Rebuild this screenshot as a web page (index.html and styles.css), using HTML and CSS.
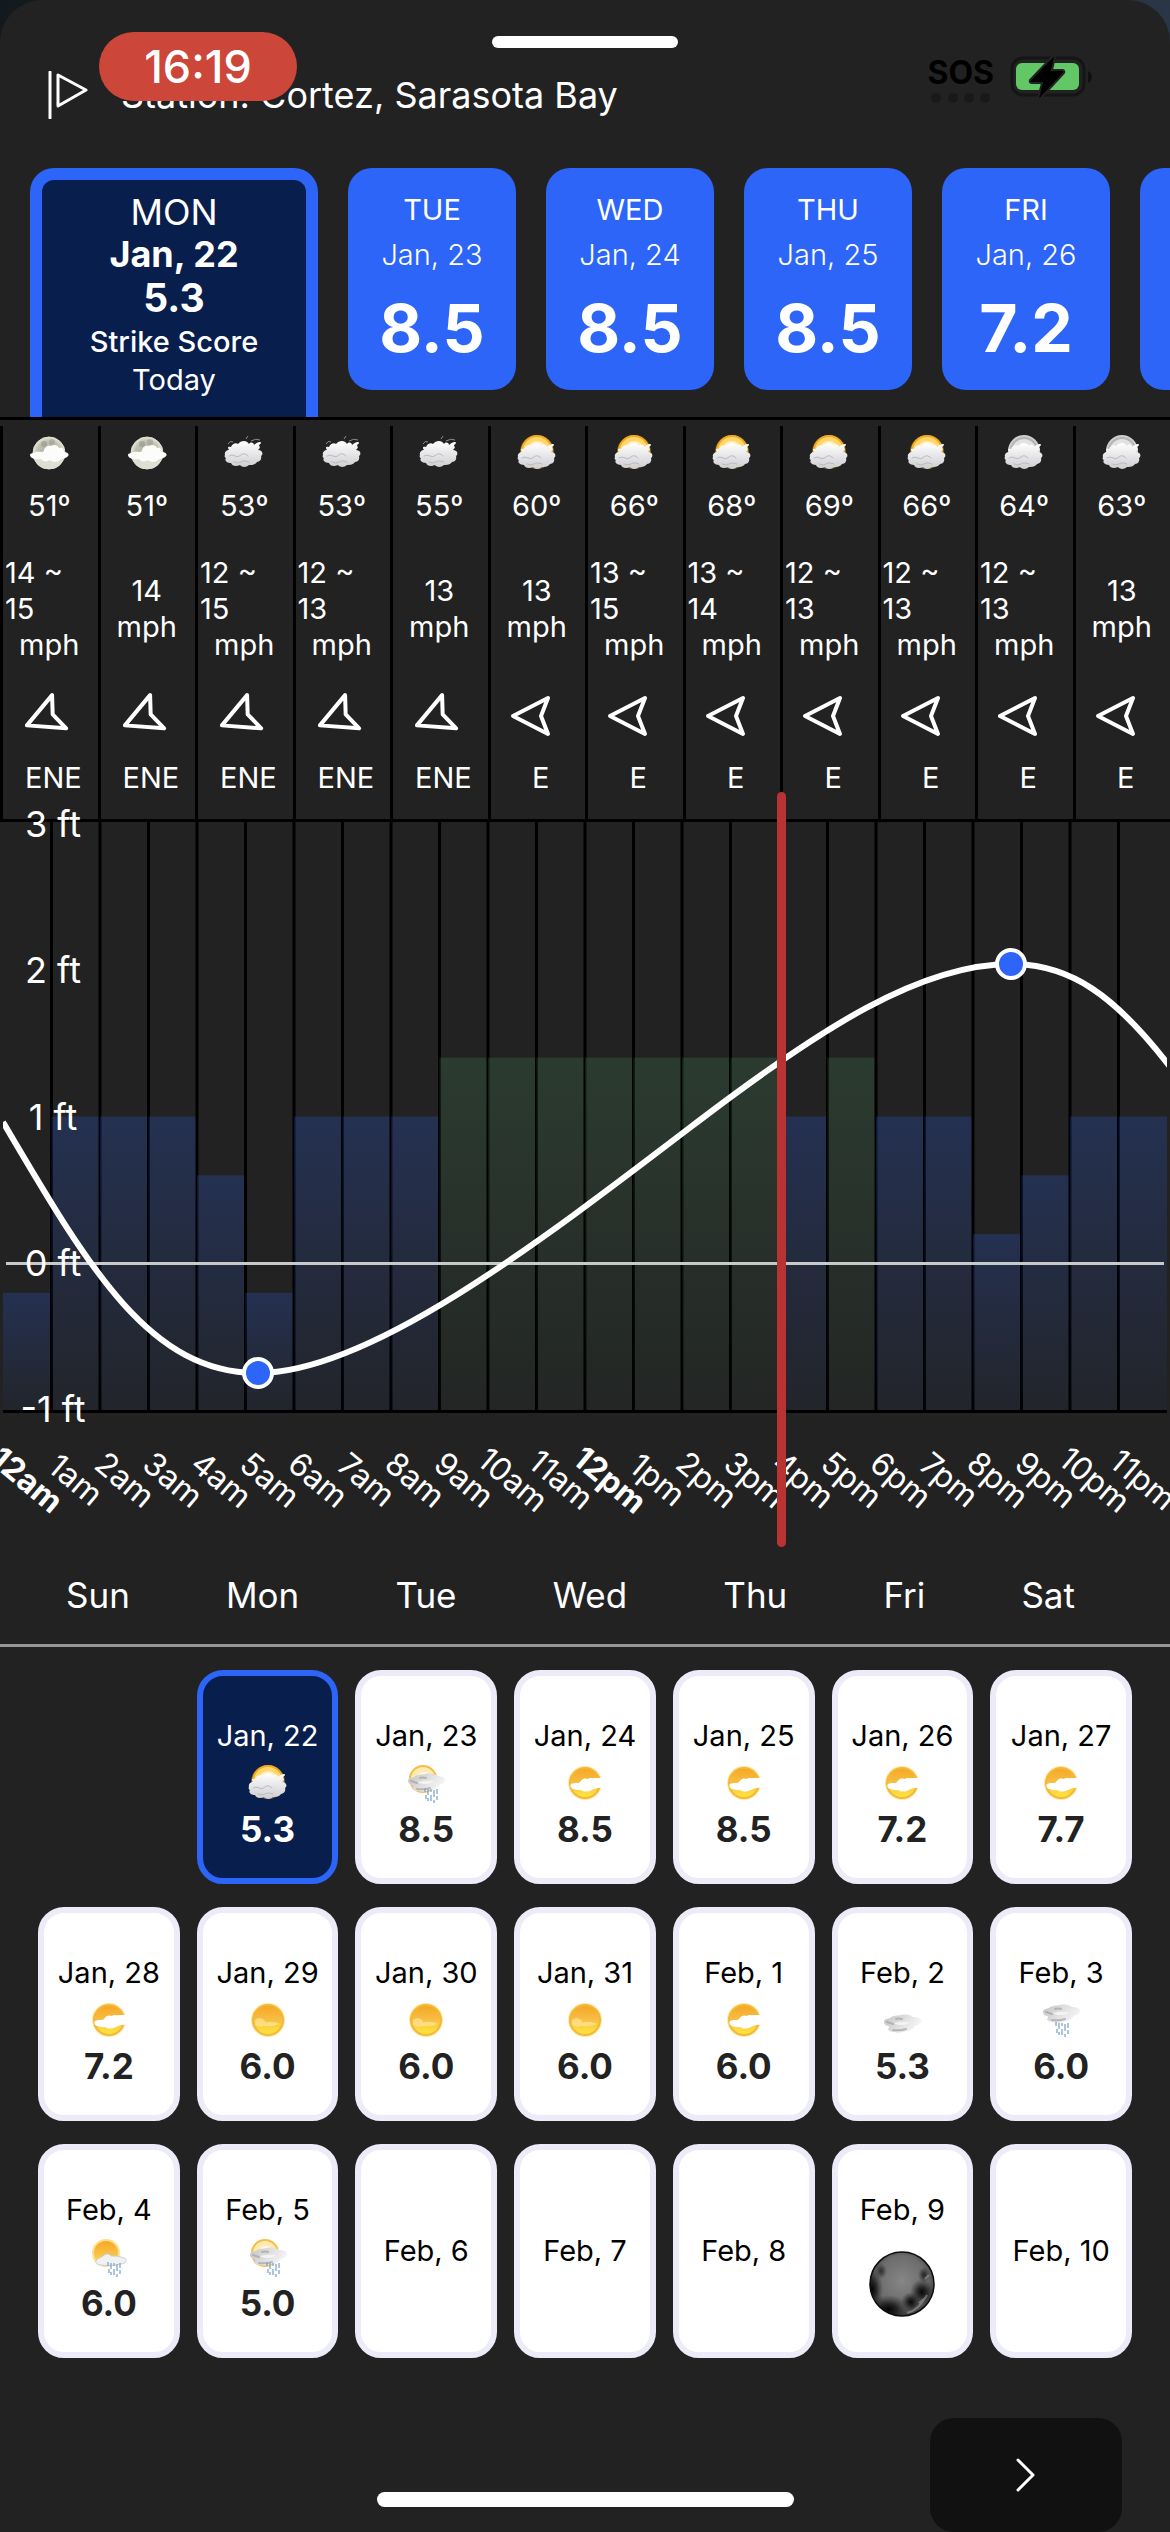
FILE: index.html
```html
<!DOCTYPE html>
<html lang="en">
<head>
    <meta charset="UTF-8">
    <meta name="viewport" content="width=device-width, initial-scale=1.0">
    <title>Strike Score - Cortez, Sarasota Bay</title>
    <link rel="stylesheet" href="styles.css">
</head>
<body>

<!-- weather icons -->
<svg class="defs" width="0" height="0" aria-hidden="true">
    <defs>
        <linearGradient id="sunFill" x1="0" y1="0" x2="0" y2="1">
            <stop offset="0" stop-color="#f5a623"/>
            <stop offset="0.5" stop-color="#f8bf45"/>
            <stop offset="1" stop-color="#ffe83c"/>
        </linearGradient>
        <linearGradient id="cloudFill" x1="0" y1="0" x2="0" y2="1">
            <stop offset="0" stop-color="#ffffff"/>
            <stop offset="0.55" stop-color="#e4e4e6"/>
            <stop offset="1" stop-color="#cfcfd1"/>
        </linearGradient>
        <linearGradient id="flatFill" x1="0" y1="0" x2="1" y2="0.4">
            <stop offset="0" stop-color="#c4c4c6"/>
            <stop offset="0.5" stop-color="#dcdcdd"/>
            <stop offset="1" stop-color="#f4f4f4"/>
        </linearGradient>
        <radialGradient id="nightFill">
            <stop offset="0" stop-color="#a9a99c"/>
            <stop offset="0.75" stop-color="#c2c2b4"/>
            <stop offset="1" stop-color="#e6e6d6"/>
        </radialGradient>
        <radialGradient id="moonFill" cx="0.5" cy="0.45" r="0.56">
            <stop offset="0" stop-color="#868686"/>
            <stop offset="0.7" stop-color="#6c6c6c"/>
            <stop offset="1" stop-color="#3a3a3a"/>
        </radialGradient>
        <radialGradient id="moonShade">
            <stop offset="0" stop-color="#000" stop-opacity="0.95"/>
            <stop offset="0.4" stop-color="#0c0c0c" stop-opacity="0.7"/>
            <stop offset="1" stop-color="#222" stop-opacity="0"/>
        </radialGradient>
        <clipPath id="moonClip"><circle cx="33" cy="33" r="32"/></clipPath>
    </defs>

    <symbol id="puff" viewBox="0 0 40 40">
        <path fill="url(#cloudFill)" d="M1 22c-1-3 2-5 4-5-2-3-1-4 2-3 1-3 5-5 7-3 3-4 9-4 11 0 2-3 5-1 5 1 3-3 7-4 7-2 0 1-2 1-2 3 2 1 0 3-1 4 4 0 6 4 3 6 1 3-1 6-4 6-2 3-6 3-8 3-3 3-8 2-9 0-4 2-8 1-9-2-4 0-7-3-5-5-1 0-2-2-1-3z"/>
        <path fill="none" stroke="#b9bac2" stroke-width="1" stroke-linecap="round" d="M5 23q3-2 6 0t6-1 7 1M10 29q4 2 7 0t8 0"/>
    </symbol>

    <symbol id="cloudy" viewBox="0 0 40 40">
        <path fill="none" stroke="#8f8f8f" stroke-width="1" d="M4 11q2-4 5-2M22 6l2-3M27 8q5-3 9-1"/>
        <use href="#puff" x="0" y="0" width="40" height="40"/>
    </symbol>
    <symbol id="night" viewBox="0 0 40 40">
        <circle cx="20" cy="20" r="16" fill="url(#nightFill)" stroke="#e2e2d2"/>
        <circle cx="15" cy="11" r="3" fill="#8e8e84" opacity="0.5"/>
        <circle cx="23" cy="9" r="3" fill="#97978c" opacity="0.5"/>
        <path fill="#deded4" d="M6 24h28q-1 12-14 12T6 24z"/>
        <path fill="#fcfcfa" d="M1 22c0-2 4-2 6-3 3-1 5 1 8-1 0-4 4-6 7-5 3-2 7-1 8 2 4-1 5 2 5 4 3 0 6 2 4 4-2 3-6 2-8 4-3 3-8 2-10 0-3 2-7 2-9-1-3 1-11 0-11-4z"/>
    </symbol>
    <symbol id="sunCloud" viewBox="0 0 40 40">
        <circle cx="20" cy="19" r="17" fill="#f7b32b" opacity="0.45"/>
        <circle cx="20" cy="18" r="15" fill="#ffd76a" stroke="#f5a91c" stroke-width="2"/>
        <circle cx="20" cy="18" r="10" fill="#fff" opacity="0.6"/>
        <use href="#puff" x="0" y="2" width="40" height="40"/>
    </symbol>
    <symbol id="moonCloud" viewBox="0 0 40 40">
        <circle cx="20" cy="18" r="15" fill="#b4b4b4" stroke="#cfcfcf" stroke-width="2"/>
        <circle cx="20" cy="18" r="12" fill="#e2e2e2"/>
        <use href="#puff" x="0" y="2" width="40" height="40"/>
    </symbol>
    <symbol id="hazy" viewBox="0 0 40 40">
        <circle cx="20" cy="20" r="17" fill="#ffe9a0"/>
        <circle cx="20" cy="20" r="15" fill="url(#sunFill)" stroke="#f3b73a" stroke-width="2"/>
        <path fill="#fff1b8" opacity="0.5" d="M7 20q5-4 9 0 3 3 0 6-5 2-9-1zM16 23q8-3 16 1-8 3-16 2z"/>
    </symbol>
    <symbol id="sunny" viewBox="0 0 40 40">
        <circle cx="20" cy="20" r="17" fill="#ffe9a0"/>
        <circle cx="20" cy="20" r="15" fill="url(#sunFill)" stroke="#f3b73a" stroke-width="2"/>
        <path fill="#fff" d="M6 21c4-2 7 0 9-2 2-4 6-4 8-3 2-2 5 0 6-1h9v10c-6-1-8 1-11 2-4 2-8 2-11 0-3 1-6-1-8-1-3-1-3-4-2-5z"/>
    </symbol>
    <symbol id="flatCloud" viewBox="0 0 40 40">
        <path fill="url(#flatFill)" d="M2 18c0-3 3-3 6-4 3-3 8-2 11-3 5-1 10 0 12 2 4 0 8 1 8 4s-3 4-6 5c-2 3-5 5-9 5-4 2-9 2-12 1-3 0-6-1-6-3 1-1 2-2 0-3-2 0-4-2-4-4z"/>
        <path fill="#f3f3f3" d="M12 19q8-2 16-1-2 3-8 3t-8-2z"/>
        <path fill="none" stroke="#a4a4a7" stroke-width="2" stroke-linecap="round" opacity="0.7" d="M5 18l6 2M14 15q3-1 6 0M11 26q7 1 13-1"/>
    </symbol>
    <symbol id="streaks" viewBox="0 0 40 40">
        <path fill="none" stroke="#7fa6d2" stroke-width="1.3" d="M16 23v4M19 24v6M17 30v4M22 24v3M22 30v6M25 25v7M25 35v3M28 24v5M28 31v4M19 33v3"/>
    </symbol>
    <symbol id="sunRain" viewBox="0 0 40 40">
        <circle cx="17" cy="16" r="13" fill="#ffeab2" stroke="#f7bd48" stroke-width="2"/>
        <circle cx="18" cy="17" r="8" fill="#fff8e4"/>
        <use href="#flatCloud" x="0" y="0" width="40" height="40"/>
        <use href="#streaks" x="3" y="2" width="40" height="40"/>
    </symbol>
    <symbol id="warmRain" viewBox="0 0 40 40">
        <circle cx="17" cy="16" r="13" fill="url(#sunFill)" stroke="#ffdf8a" stroke-width="2"/>
        <path fill="#f1f1f1" stroke="#cdcdcf" d="M7 24c2-4 6-3 8-6 3-2 6-1 7 1 4 0 8 0 13 2 5 2 1 6-4 6-7 2-14 2-19 1-3 0-6-2-5-4z"/>
        <use href="#streaks" x="3" y="2" width="40" height="40"/>
    </symbol>
    <symbol id="lightCloud" viewBox="0 0 40 40">
        <use href="#flatCloud" x="0" y="4" width="40" height="40"/>
    </symbol>
    <symbol id="rain" viewBox="0 0 40 40">
        <use href="#flatCloud" x="0" y="-6" width="40" height="40"/>
        <use href="#streaks" x="-1" y="-1" width="40" height="40"/>
    </symbol>
    <symbol id="newMoon" viewBox="0 0 66 66">
        <g clip-path="url(#moonClip)">
            <circle cx="33" cy="33" r="32" fill="url(#moonFill)"/>
            <ellipse cx="3" cy="38" rx="11" ry="20" fill="url(#moonShade)"/>
            <ellipse cx="20" cy="58" rx="20" ry="14" fill="url(#moonShade)"/>
            <ellipse cx="53" cy="41" rx="12" ry="13" fill="url(#moonShade)"/>
            <ellipse cx="42" cy="51" rx="10" ry="10" fill="url(#moonShade)"/>
            <ellipse cx="55" cy="24" rx="6" ry="8" fill="url(#moonShade)" opacity="0.7"/>
            <ellipse cx="12" cy="20" rx="6" ry="8" fill="url(#moonShade)" opacity="0.6"/>
            <path d="M38 62q12-3 20-18M56 28l4-4M50 52l6-5" fill="none" stroke="#999" stroke-width="2" opacity="0.6"/>
        </g>
        <circle cx="33" cy="33" r="32" fill="none" stroke="#0b0b0b" stroke-width="1.5"/>
    </symbol>
</svg>

<main class="sheet">
    <span class="grabber"></span>

    <div class="status">
        <span class="clock">16:19</span>
        <div class="status-right">
            <div class="sos">SOS<div class="dots"><i></i><i></i><i></i><i></i></div></div>
            <svg class="battery" viewBox="0 0 84 44">
                <rect x="2" y="3" width="72" height="37" rx="11" fill="#222" stroke="#151515" stroke-width="3"/>
                <rect x="6" y="8" width="63" height="27" rx="6" fill="#62c866"/>
                <path d="M78 16q4 2 4 6t-4 6z" fill="#111"/>
                <path d="M43 1L20 25q-1 3 2 3h10l-4 15q1 1 3 0l23-25q1-3-2-3H42l3-13q-1-2-2-1z" fill="#000" stroke="#222" stroke-width="2"/>
            </svg>
        </div>
    </div>

    <header class="station">
        <svg class="flag" viewBox="0 0 42 48">
            <path d="M3 1v46M11 4v31L39 19z" fill="none" stroke="#fff" stroke-width="3" stroke-linecap="round" stroke-linejoin="round"/>
        </svg>
        <span>Station: Cortez, Sarasota Bay</span>
    </header>

    <nav class="days" id="days"></nav>

    <section class="hours" id="hours"></section>

    <section class="tide">
        <svg class="plot" viewBox="0 0 1164 591">
            <defs>
                <linearGradient id="blueBar" x1="0" y1="0" x2="0" y2="1">
                    <stop offset="0" stop-color="#2c65f7" stop-opacity="0.22"/>
                    <stop offset="1" stop-color="#2c65f7" stop-opacity="0.04"/>
                </linearGradient>
                <linearGradient id="greenBar" x1="0" y1="0" x2="0" y2="1">
                    <stop offset="0" stop-color="#4f9f68" stop-opacity="0.2"/>
                    <stop offset="1" stop-color="#4f9f68" stop-opacity="0.03"/>
                </linearGradient>
                <clipPath id="plotClip"><rect x="0" y="0" width="1164" height="591"/></clipPath>
            </defs>
            <g id="bars"></g>
            <path d="M0 589.5H1164" stroke="#000" stroke-width="3"/>
            <path d="M3 441.5H1161" stroke="#c8cac9" stroke-width="3"/>
            <path class="curve" clip-path="url(#plotClip)" d="M0 300C87 448 147 551 255 551C367 551 537 420 697 298C817 207 917 142 1008 142C1067 142 1112 173 1168 246"/>
            <circle class="point" cx="255" cy="551" r="14"/>
            <circle class="point" cx="1008" cy="142" r="14"/>
            <g class="feet">
                <text x="50" y="15">3 ft</text>
                <text x="50" y="161">2 ft</text>
                <text x="50" y="308">1 ft</text>
                <text x="50" y="454">0 ft</text>
                <text x="50" y="600">-1 ft</text>
            </g>
        </svg>
        <div class="times" id="times"></div>
        <span class="now"></span>
    </section>

    <div class="weekdays">
        <span>Sun</span><span>Mon</span><span>Tue</span><span>Wed</span><span>Thu</span><span>Fri</span><span>Sat</span>
    </div>

    <section class="calendar" id="calendar"></section>

    <footer class="footer">
        <button class="next" aria-label="Next">
            <svg viewBox="0 0 20 34"><path d="M2 2l15 15L2 32" fill="none" stroke="#fff" stroke-width="3" stroke-linecap="round" stroke-linejoin="round"/></svg>
        </button>
    </footer>
    <span class="home"></span>
</main>

<script>
    const icon = (name, cls = 'icon') => `<svg class="${cls}"><use href="#${name}"></use></svg>`;

    // top day strip
    const days = [['TUE', 'Jan, 23', '8.5'], ['WED', 'Jan, 24', '8.5'], ['THU', 'Jan, 25', '8.5'], ['FRI', 'Jan, 26', '7.2'], ['', '', '']];
    document.getElementById('days').innerHTML = `
        <button class="day active">
            <span class="name">MON</span>
            <strong class="date">Jan, 22</strong>
            <strong class="score">5.3</strong>
            <span class="label">Strike Score</span>
            <span class="today">Today</span>
        </button>` + days.map(([name, date, score]) => `
        <button class="day">
            <span class="name">${name}</span>
            <span class="date">${date}</span>
            <strong class="score">${score}</strong>
        </button>`).join('');

    // two hour forecast columns
    const hours = [
        ['night', 51, '14 ~<br>15', 'ENE'], ['night', 51, '14', 'ENE'],
        ['cloudy', 53, '12 ~<br>15', 'ENE'], ['cloudy', 53, '12 ~<br>13', 'ENE'],
        ['cloudy', 55, '13', 'ENE'], ['sunCloud', 60, '13', 'E'],
        ['sunCloud', 66, '13 ~<br>15', 'E'], ['sunCloud', 68, '13 ~<br>14', 'E'],
        ['sunCloud', 69, '12 ~<br>13', 'E'], ['sunCloud', 66, '12 ~<br>13', 'E'],
        ['moonCloud', 64, '12 ~<br>13', 'E'], ['moonCloud', 63, '13', 'E']
    ];
    document.getElementById('hours').innerHTML = hours.map(([sky, temp, wind, dir]) => `
        <div class="hour">
            ${icon(sky)}
            <span>${temp}º</span>
            <div class="wind"><span class="${wind.length > 2 ? 'range' : ''}">${wind}</span><span>mph</span></div>
            <svg class="arrow ${dir}" viewBox="-28 -28 56 56"><path d="M-24 0L11 -18L4 0L11 18Z"/></svg>
            <span>&nbsp;${dir}</span>
        </div>`).join('');

    // activity bars in ft, one per hour
    const levels = [-0.2, 1, 1, 1, 0.6, -0.2, 1, 1, 1, 1.4, 1.4, 1.4, 1.4, 1.4, 1.4, 1.4, 1, 1.4, 1, 1, 0.2, 0.6, 1, 1];
    document.getElementById('bars').innerHTML = levels.map((ft, i) => {
        const x = i * 48.5;
        const y = 441.5 - ft * 147;
        const line = i ? `<path d="M${x} 0V588" stroke="#000" stroke-width="3"/>` : '';
        return `${line}<rect x="${x}" y="${y}" width="48.5" height="${588 - y}" fill="url(#${ft > 1 ? 'green' : 'blue'}Bar)"/>`;
    }).join('');

    document.getElementById('times').innerHTML = levels.map((_, i) => {
        const text = (i % 12 || 12) + (i < 12 ? 'am' : 'pm');
        return `<span class="time${i % 12 ? '' : ' bold'}"><span>${text}</span></span>`;
    }).join('');

    // calendar
    const calendar = [
        null, ['Jan, 22', 'sunCloud', '5.3'], ['Jan, 23', 'sunRain', '8.5'], ['Jan, 24', 'sunny', '8.5'],
        ['Jan, 25', 'sunny', '8.5'], ['Jan, 26', 'sunny', '7.2'], ['Jan, 27', 'sunny', '7.7'],
        ['Jan, 28', 'sunny', '7.2'], ['Jan, 29', 'hazy', '6.0'], ['Jan, 30', 'hazy', '6.0'], ['Jan, 31', 'hazy', '6.0'],
        ['Feb, 1', 'sunny', '6.0'], ['Feb, 2', 'lightCloud', '5.3'], ['Feb, 3', 'rain', '6.0'],
        ['Feb, 4', 'warmRain', '6.0'], ['Feb, 5', 'sunRain', '5.0'], ['Feb, 6'], ['Feb, 7'],
        ['Feb, 8'], ['Feb, 9', 'newMoon'], ['Feb, 10']
    ];
    document.getElementById('calendar').innerHTML = calendar.map((cell, i) => {
        if (!cell) return '<span></span>';
        const [date, sky, score] = cell;
        return `<button class="cell${i === 1 ? ' selected' : ''}${sky ? ' filled' : ''}">
            <span>${date}</span>
            ${sky ? icon(sky, sky === 'newMoon' ? 'moon' : 'icon') : ''}
            ${score ? `<strong>${score}</strong>` : ''}
        </button>`;
    }).join('');
</script>

</body>
</html>
```
FILE: styles.css
```css
* {
    box-sizing: border-box;
}
body {
    margin: 0;
    background: linear-gradient(90deg, #121a20, #2a3546);
    color: #fff;
    font-family: Inter, "Liberation Sans", sans-serif;
    font-size: 29px;
    line-height: 36px;
}
button {
    font: inherit;
    color: inherit;
    border: 0;
    padding: 0;
}
svg {
    display: block;
}
.defs {
    position: absolute;
}
.sheet {
    position: relative;
    min-height: 100vh;
    overflow: hidden;
    background: #222;
    border-radius: 42px 42px 0 0;
}
.grabber {
    position: absolute;
    top: 36px;
    left: 50%;
    width: 186px;
    height: 12px;
    margin-left: -93px;
    border-radius: 6px;
    background: #fff;
}

/* status bar lies over the sheet header */
.status {
    position: absolute;
    top: 32px;
    left: 99px;
    right: 76px;
    display: flex;
    justify-content: space-between;
    align-items: flex-start;
}
.clock {
    width: 198px;
    border-radius: 35px;
    background: #cc4639;
    text-align: center;
    font-size: 45px;
    font-weight: 500;
    line-height: 69px;
}
.status-right {
    display: flex;
    gap: 16px;
    padding-top: 23px;
}
.sos {
    color: #000;
    font-size: 32px;
    font-weight: 700;
    line-height: 36px;
}
.dots {
    display: flex;
    justify-content: space-between;
    padding: 2px 4px;
}
.dots i {
    width: 10px;
    height: 10px;
    border-radius: 50%;
    background: #191919;
}
.battery {
    width: 84px;
    height: 44px;
}

.station {
    display: flex;
    gap: 32px;
    padding: 71px 46px 49px 47px;
    font-size: 36px;
    line-height: 48px;
}
.flag {
    width: 42px;
    height: 48px;
}

.days {
    display: flex;
    gap: 30px;
    height: 252px;
    padding-left: 30px;
    overflow: hidden;
    border-bottom: 3px solid #000;
}
.day {
    display: flex;
    flex: none;
    flex-direction: column;
    align-items: center;
    width: 168px;
    height: 222px;
    padding-top: 24px;
    border-radius: 24px;
    background: #2c65f7;
}
.day .date {
    margin-top: 9px;
    font-weight: 300;
}
.day .score {
    margin-top: 19px;
    font-size: 66px;
    font-weight: 700;
    line-height: 72px;
}
.day.active {
    width: 288px;
    height: 249px;
    padding-top: 11px;
    border: 12px solid #2c65f7;
    border-bottom: 0;
    border-radius: 24px 24px 0 0;
    background: #081e4d;
}
.day.active .name,
.day.active .date {
    margin: 0;
    font-size: 36px;
    line-height: 42px;
}
.day.active .date {
    font-weight: 700;
}
.day.active .score {
    margin: 0;
    font-size: 39px;
    line-height: 46px;
}
.label {
    font-weight: 500;
    line-height: 42px;
}
.today {
    line-height: 34px;
}

.hours {
    display: grid;
    grid-template-columns: repeat(12, 1fr);
    padding-top: 6px;
    border-bottom: 3px solid #000;
}
.hour {
    display: flex;
    flex-direction: column;
    align-items: center;
    min-width: 0;
    padding: 7px 2px 23px 0;
    border-left: 3px solid #000;
}
.icon {
    width: 40px;
    height: 40px;
}
.hour .icon {
    margin-bottom: 15px;
}
.wind {
    display: flex;
    flex-direction: column;
    justify-content: center;
    align-items: center;
    align-self: stretch;
    height: 108px;
    margin: 31px 0 25px;
}
.wind .range {
    align-self: stretch;
    padding-left: 2px;
}
.arrow {
    width: 56px;
    height: 56px;
    margin-bottom: 16px;
}
.arrow path {
    fill: none;
    stroke: #fff;
    stroke-width: 4px;
    stroke-linejoin: round;
}
.arrow.ENE {
    transform: rotate(-23deg);
}

.tide {
    position: relative;
    padding: 0 3px;
}
.plot {
    width: 100%;
    overflow: visible;
}
.curve {
    fill: none;
    stroke: #fff;
    stroke-width: 6px;
}
.point {
    fill: #2c65f7;
    stroke: #fff;
    stroke-width: 4px;
}
.feet text {
    fill: #fff;
    font-size: 36px;
    text-anchor: middle;
}
.times {
    display: grid;
    grid-template-columns: repeat(24, 1fr);
    height: 134px;
    font-size: 32px;
}
.time {
    display: flex;
    justify-content: center;
    align-items: center;
    min-width: 0;
}
.time span {
    transform: rotate(40deg);
}
.time.bold {
    font-weight: 700;
}
.now {
    position: absolute;
    top: -30px;
    bottom: 0;
    left: 66.4%;
    width: 9px;
    border-radius: 5px;
    background: #b93333;
}

.weekdays {
    display: flex;
    justify-content: space-between;
    padding: 24px 95px 25px 66px;
    border-bottom: 3px solid #989697;
    font-size: 35px;
    line-height: 48px;
}
.calendar {
    display: grid;
    grid-template-columns: repeat(7, 1fr);
    gap: 23px 17px;
    padding: 23px 38px 0;
}
.cell {
    display: flex;
    flex-direction: column;
    justify-content: center;
    align-items: center;
    height: 214px;
    border: 6px solid #ececf8;
    border-radius: 26px;
    background: #fff;
    color: #000;
}
.cell.filled {
    justify-content: flex-start;
    padding-top: 42px;
}
.cell.selected {
    border-color: #2c65f7;
    background: #081e4d;
    color: #fff;
}
.cell strong {
    color: #222;
    font-size: 35px;
    font-weight: 700;
    line-height: 42px;
}
.cell.selected strong {
    color: #fff;
}
.cell .icon {
    margin: 9px 0 5px;
}
.moon {
    width: 66px;
    height: 66px;
    margin-top: 23px;
}

.footer {
    display: flex;
    justify-content: flex-end;
    padding: 60px 48px 0;
}
.next {
    display: flex;
    justify-content: center;
    align-items: center;
    width: 192px;
    height: 114px;
    border-radius: 24px;
    background: #111;
}
.next svg {
    width: 20px;
    height: 34px;
}
.home {
    position: absolute;
    bottom: 25px;
    left: 50%;
    width: 417px;
    height: 15px;
    margin-left: -208px;
    border-radius: 8px;
    background: #fff;
}
```
